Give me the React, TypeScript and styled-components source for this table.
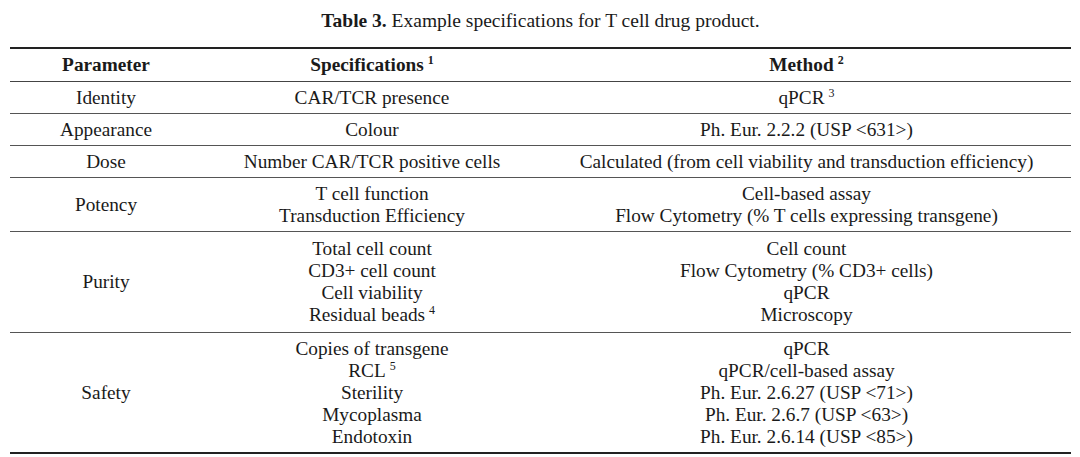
import React from "react";
import styled, { createGlobalStyle } from "styled-components";

const GlobalStyle = createGlobalStyle`
  html, body {
    margin: 0;
    padding: 0;
    background: #fff;
  }
  body {
    font-family: "Liberation Serif", "DejaVu Serif", serif;
    color: #1a1a1a;
  }
`;

type Row = {
  param: string;
  specs: React.ReactNode[];
  methods: React.ReactNode[];
  roomy?: boolean;
};

const Sup = styled.sup`
  font-size: 12px;
  line-height: 0;
  vertical-align: 7px;
  margin-left: 4px;
`;

const rows: Row[] = [
  { param: "Identity", specs: ["CAR/TCR presence"], methods: [<>qPCR<Sup>3</Sup></>] },
  { param: "Appearance", specs: ["Colour"], methods: ["Ph. Eur. 2.2.2 (USP <631>)"] },
  {
    param: "Dose",
    specs: ["Number CAR/TCR positive cells"],
    methods: ["Calculated (from cell viability and transduction efficiency)"],
  },
  {
    param: "Potency",
    specs: ["T cell function", "Transduction Efficiency"],
    methods: ["Cell-based assay", "Flow Cytometry (% T cells expressing transgene)"],
  },
  {
    param: "Purity",
    roomy: true,
    specs: [
      "Total cell count",
      "CD3+ cell count",
      "Cell viability",
      <>Residual beads<Sup>4</Sup></>,
    ],
    methods: ["Cell count", "Flow Cytometry (% CD3+ cells)", "qPCR", "Microscopy"],
  },
  {
    param: "Safety",
    specs: [
      "Copies of transgene",
      <>RCL<Sup>5</Sup></>,
      "Sterility",
      "Mycoplasma",
      "Endotoxin",
    ],
    methods: [
      "qPCR",
      "qPCR/cell-based assay",
      "Ph. Eur. 2.6.27 (USP <71>)",
      "Ph. Eur. 2.6.7 (USP <63>)",
      "Ph. Eur. 2.6.14 (USP <85>)",
    ],
  },
];

export default function App() {
  return (
    <Page>
      <GlobalStyle />
      <Caption>
        <b>Table 3.</b> Example specifications for T cell drug product.
      </Caption>
      <Table>
        <colgroup>
          <col style={{ width: 192 }} />
          <col style={{ width: 340 }} />
          <col />
        </colgroup>
        <thead>
          <tr>
            <Th>Parameter</Th>
            <Th>
              Specifications<Sup>1</Sup>
            </Th>
            <Th>
              Method<Sup>2</Sup>
            </Th>
          </tr>
        </thead>
        <tbody>
          {rows.map((r, i) => (
            <Tr key={r.param} $last={i === rows.length - 1} $roomy={!!r.roomy}>
              <Td>{r.param}</Td>
              <Td>
                {r.specs.map((s, j) => (
                  <Line key={j}>{s}</Line>
                ))}
              </Td>
              <Td>
                {r.methods.map((m, j) => (
                  <Line key={j}>{m}</Line>
                ))}
              </Td>
            </Tr>
          ))}
        </tbody>
      </Table>
    </Page>
  );
}

const Page = styled.div`
  padding: 10px 9px 0 10px;
  width: 1061px;
`;

const Caption = styled.div`
  text-align: center;
  font-size: 19.5px;
  line-height: 22px;
  margin-bottom: 15px;
  b {
    font-weight: bold;
  }
`;

const Table = styled.table`
  width: 1061px;
  border-collapse: collapse;
  border-top: 2px solid #222;
  font-size: 19.3px;
  table-layout: fixed;
`;

const Th = styled.th`
  font-weight: bold;
  text-align: center;
  line-height: 22px;
  padding: 5px 0 5px;
  border-bottom: 1px solid #444;
`;

const Td = styled.td`
  text-align: center;
  vertical-align: middle;
  line-height: 22px;
  padding: 5px 0 4px;
`;

const Tr = styled.tr<{ $last: boolean; $roomy: boolean }>`
  border-bottom: ${({ $last }) => ($last ? "2px solid #222" : "1px solid #555")};
  ${Td} {
    padding: ${({ $roomy }) => ($roomy ? "6px 0 6px" : "5px 0 4px")};
  }
`;

const Line = styled.div`
  white-space: nowrap;
`;
